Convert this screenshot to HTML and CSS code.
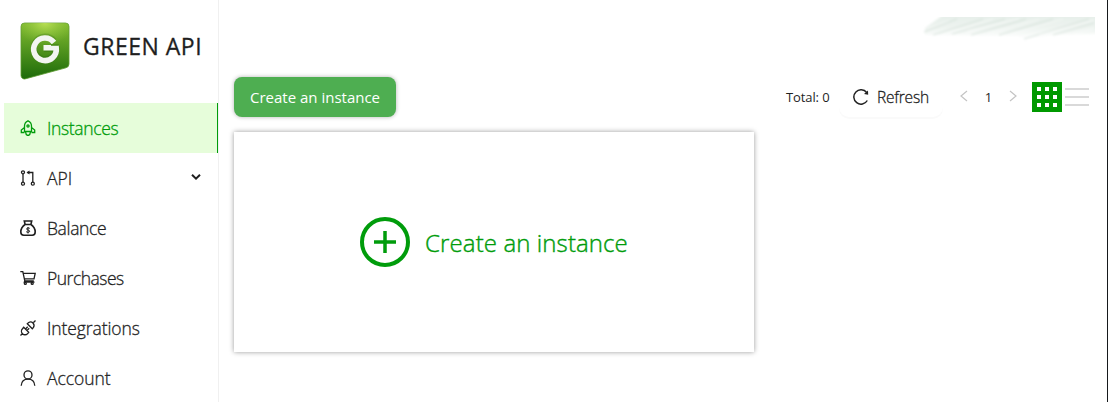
FILE: index.html
```html
<!DOCTYPE html>
<html lang="en">
<head>
<meta charset="utf-8">
<title>GREEN API</title>
<link rel="stylesheet" href="styles.css">
</head>
<body>
<div class="app">
  <aside class="sidebar">
    <div class="brand">
      <svg class="logo" width="50" height="58" viewBox="0 0 50 58">
        <defs>
          <linearGradient id="lg" x1="0" y1="0" x2="0" y2="1"><stop offset="0" stop-color="#83bb30"/><stop offset=".45" stop-color="#54971f"/><stop offset="1" stop-color="#1d6a0a"/></linearGradient>
          <radialGradient id="glow" cx=".5" cy="0" r=".6"><stop offset="0" stop-color="#c3e65a" stop-opacity=".85"/><stop offset="1" stop-color="#8cc63f" stop-opacity="0"/></radialGradient>
        </defs>
        <path d="M4.500 1h41a3.500 3.500 0 0 1 3.500 3.500V42a4 4 0 0 1-3 3.800L6 56.700A3.500 3.500 0 0 1 1 53.500v-49A3.500 3.500 0 0 1 4.500 1z" fill="url(#lg)" stroke="#5d9a31" stroke-width=".8"/>
        <path d="M4.500 1h41a3.500 3.500 0 0 1 3.500 3.500V12L25 38 1 30V4.500A3.500 3.500 0 0 1 4.500 1z" fill="url(#glow)"/>
        <path d="M34 18.800A11.300 11.300 0 1 0 36.300 27H24" fill="none" stroke="#245f10" stroke-opacity=".25" stroke-width="6"/>
        <path d="M34 20.500A11.300 11.300 0 1 0 36.200 25.800H23.500" fill="none" stroke="#f3f5f2" stroke-width="5.600"/>
        <path d="M31 22.900h7.800" stroke="#4c8d1c" stroke-width="1.800"/>
      </svg>
      <span class="brand-name">GREEN API</span>
    </div>
    <nav class="menu">
      <a class="item active"><svg class="icon" viewBox="0 0 16 16"><path d="M4.500 11.500V6C4.500 3.700 5.800 1.800 8 .8c2.200 1 3.500 2.900 3.500 5.200v5.500zM4.500 7.500 1.300 10v2.500h3.200M11.500 7.500l3.200 2.500v2.500h-3.200M5.700 12c-.2 2 .8 3 2.300 3.700C9.500 15 10.500 14 10.300 12"/><circle cx="8" cy="6" r="1.100"/></svg><span class="t-instances">Instances</span></a>
      <a class="item"><svg class="icon" viewBox="0 0 16 16"><circle cx="3" cy="2.300" r="1.500"/><circle cx="3" cy="13.700" r="1.500"/><circle cx="12.800" cy="13.700" r="1.500"/><path d="M3 3.800v8.400M12.800 12.200V2.500H7.500"/><path d="M6.500 2.500 9.500.6v3.800z" fill="currentColor" stroke="none"/></svg><span class="t-api">API</span><svg class="chevron" width="12" height="8" viewBox="0 0 12 8"><path d="m2 1.800 4 3.800 4-3.800"/></svg></a>
      <a class="item"><svg class="icon heavy" viewBox="0 0 16 16"><path d="M4.300 1h7.400l-.8 3.500H5.100zM5 4.500C2.500 6.300.8 9 .8 12c0 2 1 3.200 3 3.200h8.400c2 0 3-1.200 3-3.200 0-3-1.700-5.700-4.200-7.500z"/><path class="fine" d="M9.800 8.400C9 7.700 6.600 7.600 6.600 9s3.100.8 3.100 2.200-2.500 1.300-3.500.5M8 7v6.500"/></svg><span class="t-balance">Balance</span></a>
      <a class="item"><svg class="icon" viewBox="0 0 16 16"><path d="M.3 1.600h2.500l2 9.200h9M3.200 3.400h12l-1.200 5.400H4.500M4.800 10.800l-.5 1.400h10.200"/><circle cx="5.300" cy="13.400" r="1"/><circle cx="12.200" cy="13.400" r="1"/></svg><span class="t-purchases">Purchases</span></a>
      <a class="item"><svg class="icon" viewBox="0 0 16 16"><path d="m.5 15.500 2-2M15.500.5l-2 2M7.300 3.700l5 5 1.200-1.400A3.500 3.500 0 0 0 8.700 2.500zM3.700 7.300l5 5-1.200 1.400A3.500 3.500 0 0 1 2.500 8.700zM5.500 9l2.200-2.200M7 10.500l2.200-2.200"/></svg><span class="t-integrations">Integrations</span></a>
      <a class="item"><svg class="icon" viewBox="0 0 16 16"><circle cx="8" cy="4.900" r="4"/><path d="M1.200 15.700C1.500 11.600 4.200 9.200 8 9.200s6.500 2.400 6.800 6.500"/></svg><span class="t-account">Account</span></a>
    </nav>
  </aside>
  <main class="main">
    <header class="topbar">
      <svg class="smudge" width="174" height="26" viewBox="0 0 174 26">
        <defs>
          <linearGradient id="fade" x1="0" y1="0" x2="0" y2="1"><stop offset="0" stop-color="#e6efe9"/><stop offset=".5" stop-color="#edf3ef"/><stop offset="1" stop-color="#fff"/></linearGradient>
          <filter id="soft" x="-5%" y="-20%" width="110%" height="140%"><feGaussianBlur stdDeviation="1"/></filter>
        </defs>
        <g filter="url(#soft)">
          <path d="M22-2h156v19l-47 1-26 4-8-3-93-1V11z" fill="url(#fade)"/>
          <path d="M3 15 36 2M12 18 62 2M31 17 84 2M50 18l55-16M78 18l54-16M103 22l65-20M132 18l41-12" stroke="#cfdcd4" stroke-width="1.200" opacity=".7"/>
          <path d="M7 11 28 4M22 17 72 2M46 14 98 2M66 17l52-15M90 17l52-15M118 18l55-15M153 17l20-6" stroke="#fff" stroke-width="1.300" opacity=".4"/>
        </g>
      </svg>
    </header>
    <div class="toolbar">
      <button class="create">Create an instance</button>
      <div class="controls">
        <span class="total">Total: 0</span>
        <button class="refresh"><svg width="16" height="16" viewBox="0 0 16 16"><path d="M14.300 11.500A7.200 7.200 0 1 1 13.700 3.500"/><path d="m15 1.500.2 4.300-4.200-.9z" class="tip"/></svg><span>Refresh</span></button>
        <div class="pager">
          <svg width="8" height="12" viewBox="0 0 8 12"><path d="M7 1 1 6l6 5"/></svg>
          <span class="page">1</span>
          <svg width="8" height="12" viewBox="0 0 8 12"><path d="m1 1 6 5-6 5"/></svg>
        </div>
        <div class="views">
          <div class="grid-view"><i></i><i></i><i></i><i></i><i></i><i></i><i></i><i></i><i></i></div>
          <div class="list-view"><i></i><i></i><i></i></div>
        </div>
      </div>
    </div>
    <section class="card">
      <svg width="50" height="50" viewBox="0 0 50 50"><circle cx="25" cy="25" r="23"/><path class="plus" d="M14 25h22M25 14v22"/></svg>
      <span class="card-label">Create an instance</span>
    </section>
  </main>
</div>
</body>
</html>
```
FILE: styles.css
```css
* { box-sizing: border-box; }
body { margin: 0; background: #fff; color: #1f1f1f; font-family: "Open Sans", "Noto Sans", sans-serif; }
svg { display: block; flex: none; }
button { border: 0; padding: 0; font: inherit; color: inherit; }
.app { display: flex; height: 402px; overflow: hidden; border-right: 1px solid #16191c; }
.sidebar { width: 215px; margin-left: 4px; border-right: 1px solid #f0f0f0; flex: none; }
.brand { height: 103px; display: flex; align-items: flex-start; padding: 22px 0 0 16px; }
.brand-name { margin-left: 13px; font-size: 23px; line-height: 49px; font-weight: 500; white-space: nowrap; letter-spacing: .5px; -webkit-text-stroke: .3px #1f1f1f; }
.item { display: flex; align-items: center; height: 50px; padding-left: 16px; font-size: 17.5px; font-weight: 300; white-space: nowrap; -webkit-text-stroke: .3px currentColor; }
.item span { margin-left: 11px; }
.t-instances { letter-spacing: -.35px; }
.t-api { letter-spacing: 0; }
.t-balance { letter-spacing: -.35px; }
.t-purchases { letter-spacing: -.5px; }
.t-integrations { letter-spacing: -.1px; }
.t-account { letter-spacing: -.05px; }
.active { color: #009c0b; background: #e6fdda; border-right: 1px solid #009c0b; }
.icon { width: 16px; height: 16px; fill: none; stroke: currentColor; stroke-width: 1.3; }
.heavy { stroke-width: 1.6; }
.fine { stroke-width: 1; }
.chevron { margin: 0 16px 2px auto; fill: none; stroke: #1f1f1f; stroke-width: 2; }
.main { flex: 1; padding: 0 18px 0 15px; }
.topbar { height: 77px; display: flex; justify-content: flex-end; padding-top: 17px; }
.smudge { margin-right: -6px; }
.toolbar { height: 40px; display: flex; justify-content: space-between; }
.create { width: 162px; height: 40px; border-radius: 8px; background: #4eae51; color: #fff; font-size: 15px; box-shadow: 0 0 4px rgba(0, 0, 0, .3); white-space: nowrap; }
.controls { display: flex; align-items: center; }
.total { width: 53px; font-size: 13px; letter-spacing: -.1px; white-space: nowrap; }
.refresh { width: 104px; height: 40px; display: flex; align-items: center; padding-left: 14px; gap: 8px; border-radius: 10px; background: #fff; font-size: 15.5px; font-weight: 300; letter-spacing: -.2px; -webkit-text-stroke: .3px currentColor; box-shadow: 0 2px 0 rgba(0, 0, 0, .02); }
.refresh svg { fill: none; stroke: #222; stroke-width: 1.5; }
.refresh .tip { fill: #222; stroke: none; }
.pager { display: flex; align-items: center; width: 57px; margin-left: 17px; justify-content: space-between; font-size: 13px; }
.pager svg { fill: none; stroke: #c4c4c4; stroke-width: 1.2; margin-bottom: 2px; }
.views { display: flex; align-items: center; margin-left: 15px; gap: 3px; }
.grid-view { width: 30px; height: 30px; background: #009900; display: grid; grid-template-columns: repeat(3, 4px); grid-auto-rows: 4px; gap: 4px; padding: 5px; }
.grid-view i { background: #fff; }
.list-view { width: 24px; display: grid; gap: 6px; }
.list-view i { height: 2px; background: #d9d9d9; }
.card { width: 520px; height: 220px; margin-top: 15px; display: flex; align-items: center; justify-content: center; gap: 15px; background: #fff; color: #009c0b; box-shadow: 0 0 5px rgba(0, 0, 0, .4); }
.card svg { fill: none; stroke: #009c0b; stroke-width: 4; }
.card .plus { stroke-width: 3.5; }
.card-label { font-size: 24px; font-weight: 300; letter-spacing: .1px; -webkit-text-stroke: .4px currentColor; white-space: nowrap; }
```
